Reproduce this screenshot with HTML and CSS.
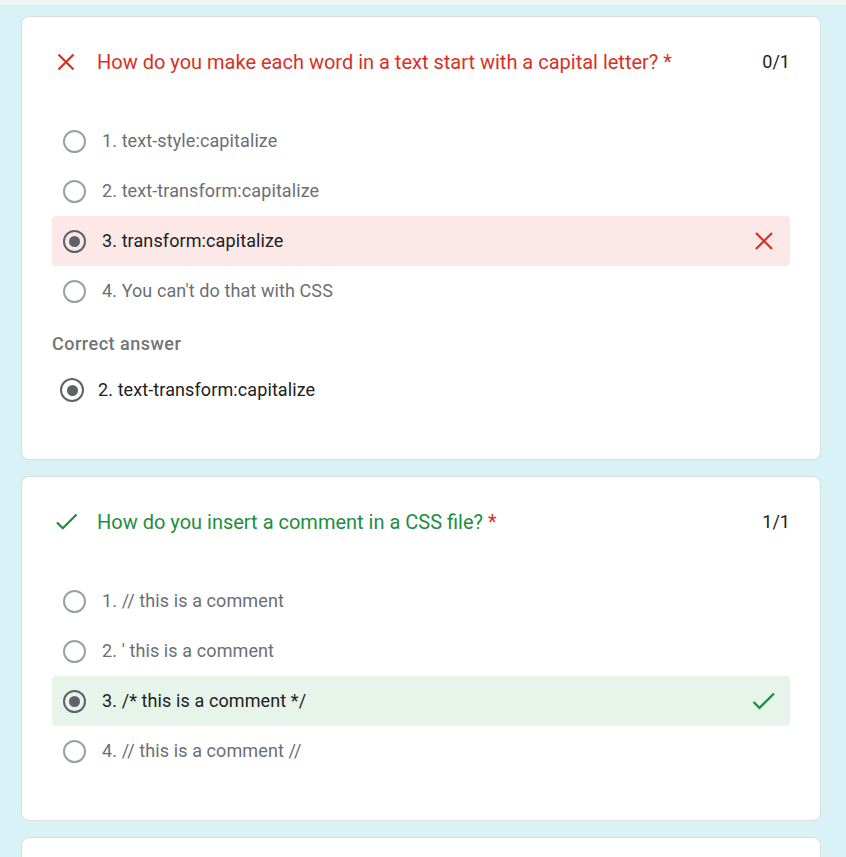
FILE: index.html
```html
<!DOCTYPE html>
<html>
<head>
<meta charset="utf-8">
<link rel="stylesheet" href="styles.css">
</head>
<body>
<div class="topstrip"></div>
<main class="page">
  <section class="card">
    <header class="q-head">
      <svg class="q-icon" width="28" height="24" viewBox="0 0 28 24"><path d="M6.5 4.5 L21.5 19.5 M21.5 4.5 L6.5 19.5" stroke="#d93025" stroke-width="2.2" fill="none"/></svg>
      <span class="q-title wrong">How do you make each word in a text start with a capital letter? <span class="req">*</span></span>
      <span class="score">0/1</span>
    </header>
    <ul class="opts">
      <li class="opt"><span class="radio"></span><span class="label">1. text-style:capitalize</span></li>
      <li class="opt"><span class="radio"></span><span class="label">2. text-transform:capitalize</span></li>
      <li class="opt picked bad"><span class="radio on"></span><span class="label">3. transform:capitalize</span>
        <svg class="mark" width="24" height="24" viewBox="0 0 24 24"><path d="M4 4 L20 20 M20 4 L4 20" stroke="#d93025" stroke-width="2.2" fill="none"/></svg></li>
      <li class="opt"><span class="radio"></span><span class="label">4. You can't do that with CSS</span></li>
    </ul>
    <div class="correct-label">Correct answer</div>
    <div class="opt correct"><span class="radio on big"></span><span class="label">2. text-transform:capitalize</span></div>
  </section>

  <section class="card">
    <header class="q-head">
      <svg class="q-icon" width="28" height="24" viewBox="0 0 28 24"><path d="M5 12.5 L10.8 18.2 L24.5 4.5" stroke="#1e8e3e" stroke-width="2.3" fill="none"/></svg>
      <span class="q-title right">How do you insert a comment in a CSS file? <span class="req">*</span></span>
      <span class="score">1/1</span>
    </header>
    <ul class="opts">
      <li class="opt"><span class="radio"></span><span class="label">1. // this is a comment</span></li>
      <li class="opt"><span class="radio"></span><span class="label">2. ' this is a comment</span></li>
      <li class="opt picked good"><span class="radio on"></span><span class="label">3. /* this is a comment */</span>
        <svg class="mark" width="24" height="24" viewBox="0 0 24 24"><path d="M1.5 13 L7.5 18.8 L22 4.5" stroke="#1e8e3e" stroke-width="2.3" fill="none"/></svg></li>
      <li class="opt"><span class="radio"></span><span class="label">4. // this is a comment //</span></li>
    </ul>
  </section>

  <section class="card stub"></section>
</main>
</body>
</html>
```

FILE: styles.css
```css
* { box-sizing: border-box; }
html, body { margin: 0; padding: 0; }
body {
  background: #d9f2f8;
  font-family: Roboto, "Noto Sans", Arial, sans-serif;
  color: #202124;
  height: 857px;
  overflow: hidden;
}
.topstrip { height: 5px; background: #f0f2f3; }
.page {
  padding: 11px 0 0 21px;
  display: flex;
  flex-direction: column;
  gap: 16px;
}
.card {
  width: 800px;
  background: #fff;
  border: 1px solid #dadce0;
  border-radius: 8px;
  padding: 0 30px 44px;
}
.card.stub { height: 60px; }
.q-head {
  display: flex;
  align-items: center;
  padding-top: 33px;
  height: 57px;
  margin-bottom: 42px;
}
.q-icon { flex: none; margin-right: 17px; }
.q-title {
  flex: 1;
  font-size: 20px;
  line-height: 24px;
}
.q-title.wrong { color: #d93025; }
.q-title.right { color: #1e8e3e; }
.req { color: #d93025; }
.score {
  font-size: 18px;
  line-height: 24px;
  color: #202124;
}
.opts { list-style: none; margin: 0; padding: 0; }
.opt {
  display: flex;
  align-items: center;
  height: 50px;
  padding-left: 11px;
  border-radius: 4px;
  font-size: 18px;
  letter-spacing: 0.1px;
  color: #6b6f74;
}
.radio {
  flex: none;
  width: 23px;
  height: 23px;
  border: 2px solid #9aa0a6;
  border-radius: 50%;
  margin-right: 16px;
  display: flex;
  align-items: center;
  justify-content: center;
}
.radio.on { border-color: #5f6368; }
.radio.on::after {
  content: "";
  width: 11px;
  height: 11px;
  border-radius: 50%;
  background: #5f6368;
}
.radio.big { width: 24px; height: 24px; margin-right: 14px; }
.label { flex: 1; padding-bottom: 2px; }
.opt.picked { color: #202124; padding-right: 14px; }
.opt.bad { background: #fce8e6; }
.opt.good { background: #e6f4ea; }
.mark { flex: none; }
.correct-label {
  margin-top: 16px;
  font-size: 18px;
  line-height: 24px;
  font-weight: 500;
  letter-spacing: 0.5px;
  color: #70757a;
}
.opt.correct {
  margin-top: 9px;
  padding-left: 8px;
  color: #202124;
}
```
